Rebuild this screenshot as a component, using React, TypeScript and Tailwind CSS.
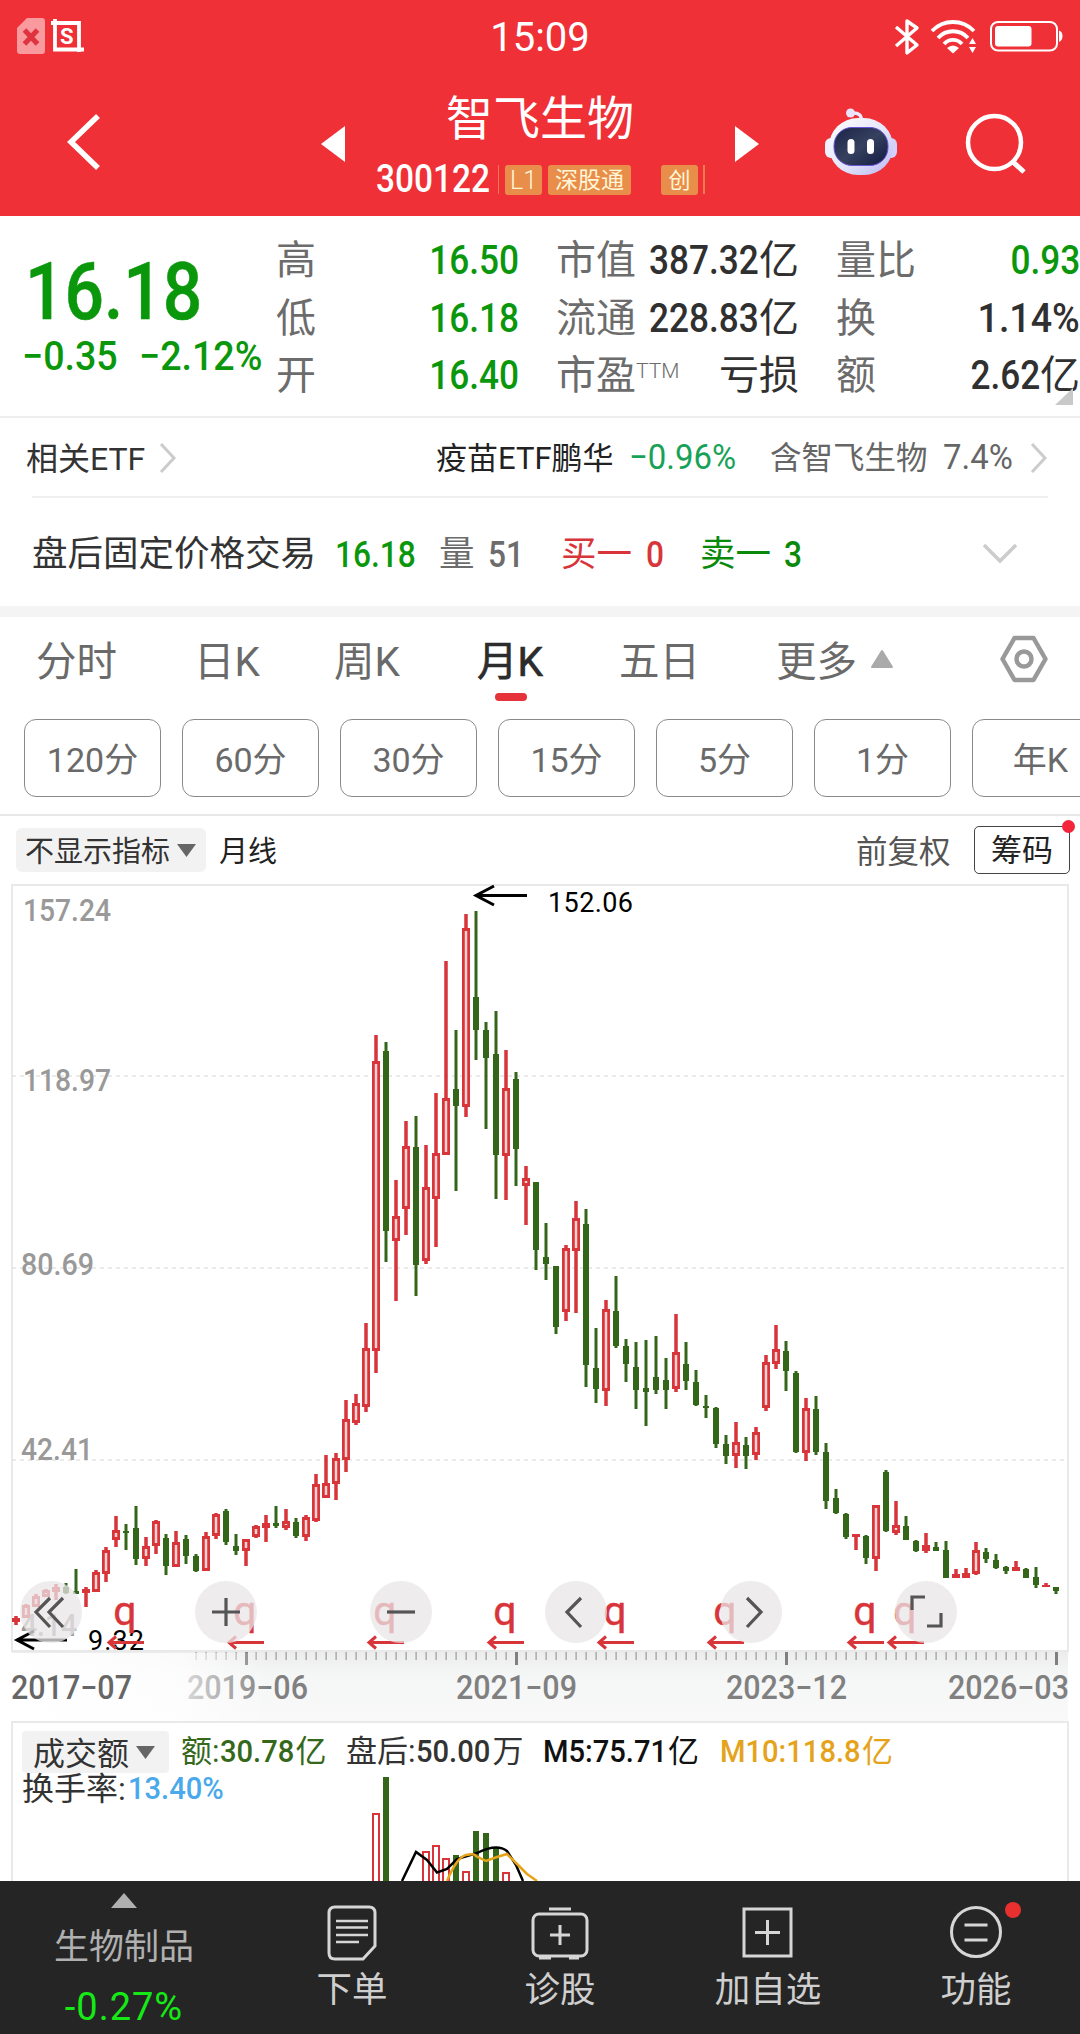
import type { ReactNode } from 'react';

type Tone = 'r' | 'g';
// tone, high, body top, body bottom, low
type Candle = [Tone, number, number, number, number];

const RED = '#d8353b';
const GREEN = '#34661a';

const candles: Candle[] = [
  ['r', 1616, 1618, 1622, 1625], ['r', 1604, 1605, 1618, 1618], ['r', 1594, 1596, 1607, 1607],
  ['r', 1589, 1590, 1597, 1597], ['r', 1584, 1587, 1592, 1600], ['g', 1583, 1587, 1593, 1594],
  ['g', 1569, 1591, 1594, 1594], ['r', 1587, 1589, 1593, 1607], ['r', 1570, 1572, 1592, 1592],
  ['r', 1547, 1550, 1574, 1582], ['r', 1516, 1530, 1540, 1547], ['g', 1524, 1531, 1533, 1550],
  ['g', 1506, 1528, 1559, 1565], ['r', 1537, 1546, 1559, 1566], ['r', 1520, 1521, 1546, 1554],
  ['g', 1534, 1538, 1566, 1575], ['r', 1531, 1542, 1567, 1567], ['g', 1535, 1539, 1556, 1564],
  ['g', 1554, 1556, 1571, 1572], ['r', 1532, 1536, 1571, 1571], ['r', 1513, 1514, 1536, 1539],
  ['g', 1509, 1511, 1542, 1545], ['g', 1534, 1546, 1551, 1555], ['r', 1539, 1539, 1551, 1566],
  ['r', 1525, 1526, 1537, 1538], ['r', 1515, 1523, 1528, 1542], ['g', 1506, 1523, 1526, 1528],
  ['r', 1509, 1521, 1528, 1530], ['g', 1518, 1522, 1536, 1538], ['r', 1515, 1517, 1537, 1541],
  ['r', 1474, 1484, 1521, 1522], ['r', 1455, 1483, 1498, 1498], ['r', 1453, 1458, 1484, 1500],
  ['r', 1400, 1419, 1460, 1472], ['r', 1394, 1403, 1423, 1425], ['r', 1323, 1348, 1407, 1412],
  ['r', 1035, 1061, 1351, 1373], ['g', 1042, 1051, 1231, 1262], ['r', 1180, 1216, 1241, 1301],
  ['r', 1121, 1146, 1209, 1235], ['g', 1116, 1147, 1265, 1296], ['r', 1145, 1187, 1261, 1264],
  ['r', 1093, 1153, 1199, 1247], ['r', 961, 1098, 1155, 1155], ['g', 1030, 1089, 1106, 1191],
  ['r', 914, 928, 1107, 1117], ['g', 911, 997, 1030, 1060], ['g', 1022, 1030, 1058, 1129],
  ['g', 1011, 1054, 1155, 1199], ['r', 1050, 1088, 1156, 1200], ['g', 1072, 1079, 1149, 1186],
  ['r', 1166, 1178, 1186, 1225], ['g', 1182, 1182, 1250, 1270], ['g', 1223, 1257, 1264, 1280],
  ['g', 1266, 1266, 1327, 1334], ['r', 1245, 1248, 1312, 1321], ['r', 1201, 1218, 1251, 1313],
  ['g', 1209, 1224, 1365, 1387], ['g', 1328, 1368, 1389, 1403], ['r', 1300, 1309, 1391, 1406],
  ['g', 1276, 1311, 1346, 1348], ['g', 1339, 1346, 1364, 1382], ['g', 1342, 1367, 1390, 1409],
  ['g', 1340, 1388, 1392, 1426], ['g', 1336, 1377, 1390, 1394], ['g', 1358, 1380, 1390, 1409],
  ['r', 1314, 1352, 1389, 1392], ['g', 1342, 1364, 1381, 1390], ['g', 1370, 1382, 1405, 1406],
  ['g', 1395, 1406, 1408, 1418], ['g', 1407, 1408, 1444, 1448], ['g', 1435, 1444, 1456, 1464],
  ['r', 1422, 1442, 1456, 1468], ['g', 1437, 1445, 1456, 1469], ['r', 1427, 1432, 1455, 1460],
  ['r', 1355, 1362, 1408, 1411], ['r', 1325, 1349, 1364, 1369], ['g', 1341, 1351, 1371, 1391],
  ['g', 1371, 1373, 1452, 1453], ['r', 1398, 1408, 1453, 1461], ['g', 1396, 1409, 1452, 1455],
  ['g', 1443, 1452, 1501, 1509], ['g', 1489, 1498, 1513, 1514], ['g', 1513, 1514, 1537, 1539],
  ['r', 1534, 1534, 1537, 1550], ['g', 1535, 1536, 1558, 1564], ['r', 1505, 1505, 1559, 1571],
  ['g', 1470, 1472, 1531, 1532], ['r', 1501, 1525, 1533, 1535], ['g', 1516, 1526, 1540, 1540],
  ['g', 1540, 1541, 1551, 1552], ['r', 1533, 1545, 1551, 1553], ['g', 1542, 1547, 1551, 1551],
  ['g', 1541, 1550, 1578, 1578], ['r', 1569, 1574, 1578, 1578], ['r', 1568, 1573, 1578, 1578],
  ['r', 1542, 1550, 1574, 1575], ['g', 1548, 1552, 1559, 1563], ['g', 1554, 1560, 1568, 1569],
  ['g', 1566, 1567, 1571, 1574], ['r', 1561, 1567, 1571, 1571], ['g', 1568, 1569, 1578, 1578],
  ['g', 1567, 1577, 1585, 1588], ['r', 1583, 1585, 1587, 1587], ['g', 1587, 1587, 1591, 1594],
];

const dividends = [125, 245, 385, 505, 615, 725, 865, 905];

const priceLabels = [
  { text: '157.24', x: 23, y: 921, w: 88 },
  { text: '118.97', x: 23, y: 1091, w: 88 },
  { text: '80.69', x: 21, y: 1275, w: 73 },
  { text: '42.41', x: 21, y: 1460, w: 72 },
  { text: '4.14', x: 21, y: 1636, w: 56 },
];

const dateLabels = [
  { text: '2019−06', x: 187 },
  { text: '2021−09', x: 456 },
  { text: '2023−12', x: 726 },
  { text: '2026−03', x: 948 },
];

const volumeBars: [Tone, number, number][] = [
  ['r', 376, 1813], ['g', 386, 1777], ['r', 426, 1851], ['r', 436, 1845], ['r', 446, 1858],
  ['g', 456, 1855], ['r', 466, 1871], ['g', 476, 1831], ['g', 486, 1833], ['g', 496, 1847], ['r', 506, 1872],
];

const periods = ['120分', '60分', '30分', '15分', '5分', '1分', '年K'];

interface NumProps {
  children: ReactNode;
  className?: string;
  right?: boolean;
  wide?: boolean;
}

// Narrow digits: the inner span is squeezed, the caller gives the box its width
function Num({ children, className = '', right = false, wide = false }: NumProps) {
  return (
    <span className={`flex shrink-0 whitespace-nowrap ${right ? 'justify-end' : ''} ${className}`}>
      <span className={`block ${wide ? 'scale-x-[0.94]' : 'scale-x-[0.88]'} ${right ? 'origin-right' : 'origin-left'}`}>
        {children}
      </span>
    </span>
  );
}

function StatusBar() {
  return (
    <div className="flex h-14 items-end justify-between pr-[17px] pl-[17px]">
      <div className="flex h-[38px] w-[300px] items-start gap-1.5">
        <svg width="28" height="38" viewBox="0 0 28 38">
          <path d="M10 0H25a3 3 0 0 1 3 3V33a3 3 0 0 1-3 3H3a3 3 0 0 1-3-3V10z" fill="#f99a9f" />
          <path d="M7.500 12l13 14M20.500 12L7.500 26" stroke="#df3440" strokeWidth="5" />
        </svg>
        <svg width="33" height="36" viewBox="0 0 33 36" fill="none" stroke="#fff" strokeWidth="3.8">
          <path d="M0 5H28V34M4 1V31.500H33" />
          <text x="9" y="26" fontSize="22" fontFamily="Roboto" fontWeight="700" fill="#fff" stroke="none">S</text>
        </svg>
      </div>
      <div className="h-[37px] text-[40px] leading-[38px] text-white">15:09</div>
      <div className="flex h-[38px] w-[300px] items-start justify-end">
        <svg width="170" height="38" viewBox="893 18 170 38" fill="none" stroke="#fff">
          <path d="M896 27L917 45 907 53V21L917 28 896 46" strokeWidth="3.400" strokeLinejoin="round" />
          <path d="M932 31A29 29 0 0 1 974 31M938 38A20 20 0 0 1 968 38M944 44A12 12 0 0 1 962 44" strokeWidth="3.8" />
          <path d="M947 48Q953 43 959 48L953 53.500zM969 44L972.500 38 976 44zM969 47H976L972.500 53z" fill="#fff" stroke="none" />
          <rect x="991" y="22" width="66" height="28.500" rx="7" strokeWidth="2" />
          <rect x="995" y="26" width="36.500" height="20.500" rx="3" fill="#fff" stroke="none" />
          <path d="M1059 30.500q3.500 1 3.500 5.500t-3.500 6z" fill="#fff" stroke="none" />
        </svg>
      </div>
    </div>
  );
}

function Robot() {
  return (
    <svg width="74" height="70" viewBox="0 0 74 70">
      <defs>
        <linearGradient id="shell" x1="0" y1="0" x2="1" y2="1">
          <stop offset="0" stopColor="#ffffff" />
          <stop offset="0.55" stopColor="#e3e4fa" />
          <stop offset="1" stopColor="#b9b6f3" />
        </linearGradient>
        <linearGradient id="visor" x1="0" y1="0" x2="1" y2="1">
          <stop offset="0" stopColor="#1b2446" />
          <stop offset="0.5" stopColor="#36405f" />
          <stop offset="1" stopColor="#121b40" />
        </linearGradient>
      </defs>
      <path d="M37 15Q39 5 27 6" stroke="#eeeaff" strokeWidth="3.500" fill="none" />
      <circle cx="26.500" cy="6" r="4.500" fill="#eae3fd" />
      <rect x="1" y="31" width="14" height="20" rx="6" fill="#eef0ff" />
      <rect x="59" y="31" width="14" height="20" rx="6" fill="#d5d2fa" />
      <rect x="5" y="11" width="64" height="57" rx="29" fill="url(#shell)" />
      <rect x="10" y="20.500" width="54" height="38" rx="18" fill="url(#visor)" stroke="#6a55d8" strokeWidth="1" />
      <rect x="23.500" y="32" width="7" height="15" rx="3.500" fill="#fff" />
      <rect x="43" y="32" width="7" height="15" rx="3.500" fill="#fff" />
    </svg>
  );
}

function Header() {
  return (
    <div className="h-[216px] bg-[#ef3036] text-white">
      <StatusBar />
      <div className="flex h-40">
        <svg className="mt-14 ml-[65px]" width="40" height="60" viewBox="0 0 40 60">
          <path d="M33 4L6 30 33 56" stroke="#fff" strokeWidth="5.500" fill="none" />
        </svg>
        <svg className="mt-[70px] ml-[216px]" width="24" height="36" viewBox="0 0 24 36">
          <path d="M0 18L24 0V36z" fill="#fff" />
        </svg>
        <div className="ml-[30px] flex w-[330px] flex-col">
          <div className="mt-8 ml-[71px] h-[58px] text-[47px] leading-[62px]">智飞生物</div>
          <div className="mt-[18px] flex h-[31px] items-center">
            <Num className="ml-px w-[122px] text-[38px] leading-[35px] font-medium">300122</Num>
            <span className="h-[29px] w-px bg-[#f07c4c]" />
            <span className="ml-[6px] h-[30px] w-[37px] rounded-[3px] bg-[#e98e4a] text-center text-[25px] leading-[31px] font-light text-[#fff6d8]">L1</span>
            <span className="ml-[6px] h-[30px] w-[83px] rounded-[3px] bg-[#e98e4a] text-center text-[23px] leading-[31px] text-[#fff6d8]">深股通</span>
            <span className="ml-[30px] h-[30px] w-[37px] rounded-[3px] bg-[#e98e4a] text-center text-[22px] leading-[31px] text-[#fff6d8]">创</span>
            <span className="ml-[5px] h-[29px] w-0.5 bg-[#f07c4c]" />
          </div>
        </div>
        <svg className="mt-[70px] ml-[30px]" width="24" height="36" viewBox="0 0 24 36">
          <path d="M24 18L0 0V36z" fill="#fff" />
        </svg>
        <div className="mt-[51px] ml-[65px]">
          <Robot />
        </div>
        <svg className="mt-14 ml-[66px]" width="64" height="64" viewBox="964 112 64 64" fill="none" stroke="#fff" strokeWidth="4.500">
          <circle cx="994.500" cy="142.500" r="26.500" />
          <path d="M1013 162L1024 172" strokeWidth="5" />
        </svg>
      </div>
    </div>
  );
}

function QuotePanel() {
  return (
    <div className="relative flex h-[202px] border-b-2 border-[#eee] pt-4 text-[40px] text-[#303030]">
      <div className="w-[276px] pt-[23px] font-medium text-[#0a970c]">
        <Num className="ml-[25px] h-[74px] w-[170px] text-[79px] leading-[74px] [-webkit-text-stroke:0.5px]">16.18</Num>
        <div className="flex pt-2 leading-[40px]">
          <Num wide className="ml-[22px] w-[117px]">−0.35</Num>
          <Num wide>−2.12%</Num>
        </div>
      </div>
      <div className="w-[243px] leading-[57.500px]">
        {[['高', '16.50'], ['低', '16.18'], ['开', '16.40']].map(([label, value]) => (
          <div key={label} className="flex justify-between">
            <span className="text-[#6c6c6c]">{label}</span>
            <Num right className="font-medium text-[#0a970c]">{value}</Num>
          </div>
        ))}
      </div>
      <div className="ml-[37px] w-[243px] leading-[57.500px]">
        <div className="flex justify-between">
          <span className="text-[#6c6c6c]">市值</span>
          <span className="flex"><Num right className="w-[110px] font-medium">387.32</Num>亿</span>
        </div>
        <div className="flex justify-between">
          <span className="text-[#6c6c6c]">流通</span>
          <span className="flex"><Num right className="w-[110px] font-medium">228.83</Num>亿</span>
        </div>
        <div className="flex justify-between">
          <span className="flex text-[#6c6c6c]">市盈<span className="text-[21px] leading-[48px] font-light">TTM</span></span>
          <span>亏损</span>
        </div>
      </div>
      <div className="ml-[37px] w-[244px] leading-[57.500px]">
        <div className="flex justify-between">
          <span className="text-[#6c6c6c]">量比</span>
          <Num right className="font-medium text-[#0a970c]">0.93</Num>
        </div>
        <div className="flex justify-between">
          <span className="text-[#6c6c6c]">换</span>
          <Num right wide className="font-medium">1.14%</Num>
        </div>
        <div className="flex justify-between">
          <span className="text-[#6c6c6c]">额</span>
          <span className="flex"><Num right className="font-medium">2.62</Num>亿</span>
        </div>
      </div>
      <svg className="absolute top-[172px] left-[1055px]" width="18" height="17" viewBox="0 0 18 17">
        <path d="M18 0V17H0z" fill="#c9c9c9" />
      </svg>
    </div>
  );
}

function Chevron({ className = '' }: { className?: string }) {
  return (
    <svg className={className} width="18" height="32" viewBox="0 0 18 32">
      <path d="M2 2L15 16 2 30" stroke="#ccc" strokeWidth="3" fill="none" />
    </svg>
  );
}

function EtfRow() {
  return (
    <div className="mx-[32px] flex h-20 items-center border-b-2 border-[#f0f0f0] pt-0.5 text-[31.500px] text-[#333]">
      <span className="-ml-[6px] w-[119px] pt-0.5 text-[32px] whitespace-nowrap">相关ETF</span>
      <Chevron className="ml-[14px]" />
      <span className="ml-[259px] w-[178px] pt-0.5 text-[31px] whitespace-nowrap text-[#222]">疫苗ETF鹏华</span>
      <Num wide className="ml-[15px] w-[141px] text-[35px] text-[#18a257]">−0.96%</Num>
      <span className="w-[173px] pt-0.5 whitespace-nowrap text-[#666]">含智飞生物</span>
      <Num wide className="w-[87px] text-[35px] text-[#666]">7.4%</Num>
      <Chevron />
    </div>
  );
}

function AfterHoursRow() {
  return (
    <div className="flex h-[108px] items-center pt-[5px] pl-[32px] text-[35.500px] whitespace-nowrap text-[#333]">
      <span className="w-[303px]">盘后固定价格交易</span>
      <Num className="w-[104px] text-[36px] font-medium text-[#0a970c]">16.18</Num>
      <span className="w-[49px] text-[#6c6c6c]">量</span>
      <Num className="w-[73px] text-[36px] font-medium text-[#6c6c6c]">51</Num>
      <span className="w-[85px] text-[#d8353b]">买一</span>
      <Num className="w-[54px] text-[36px] font-medium text-[#d8353b]">0</Num>
      <span className="w-[84px] text-[#0a8a0c]">卖一</span>
      <Num className="w-[197px] text-[36px] font-medium text-[#0a8a0c]">3</Num>
      <svg width="38" height="22" viewBox="0 0 38 22">
        <path d="M3 1L19 17 35 1" stroke="#ccc" strokeWidth="3.500" fill="none" />
      </svg>
    </div>
  );
}

function Tabs() {
  return (
    <div className="flex h-[102px] items-start pt-2 pl-[36px] text-[40.500px] leading-[74px] whitespace-nowrap text-[#6a6a6a]">
      <span className="w-[158px]">分时</span>
      <span className="w-[140px]">日K</span>
      <span className="w-[143px]">周K</span>
      <span className="flex w-[142px] flex-col text-[#2c2c2c] [-webkit-text-stroke:0.7px]">
        月K
        <span className="-mt-1.5 ml-[18px] h-2 w-8 rounded-full bg-[#e63239]" />
      </span>
      <span className="w-[157px]">五日</span>
      <span className="w-[94px]">更多</span>
      <svg className="mt-6" width="24" height="20" viewBox="0 0 24 20">
        <path d="M12 2L22 18H2z" fill="#aaa" stroke="#aaa" strokeWidth="2" strokeLinejoin="round" />
      </svg>
      <svg className="mt-2.5 ml-[105px]" width="50" height="48" viewBox="0 0 50 48" fill="none" stroke="#999" strokeWidth="4.500">
        <path d="M15.500 3H34.500L46.500 24 34.500 45H15.500L3.500 24z" strokeLinejoin="round" />
        <circle cx="25" cy="24" r="7.500" />
      </svg>
    </div>
  );
}

function PeriodPills() {
  return (
    <div className="flex h-[97px] gap-[21px] overflow-hidden border-b-2 border-[#e8e8e8] pl-6">
      {periods.map((p) => (
        <button key={p} className="h-[78px] w-[137px] shrink-0 rounded-xl border border-[#8a8a8a] text-[34px] leading-[80px] text-[#6a6a6a]">
          {p}
        </button>
      ))}
    </div>
  );
}

function DownTriangle({ className = '' }: { className?: string }) {
  return (
    <svg className={className} width="19" height="13" viewBox="0 0 19 13">
      <path d="M0 0H19L9.500 13z" fill="#666" />
    </svg>
  );
}

function IndicatorBar() {
  return (
    <div className="flex h-[67px] items-start pt-2.5 pl-4 whitespace-nowrap">
      <div className="mt-0.5 flex h-11 w-[190px] items-center rounded-md bg-[#f2f2f2] pl-[9px] text-[29px] leading-[44px] text-[#333]">
        <span className="pt-[3px]">不显示指标</span>
        <DownTriangle className="ml-[7px]" />
      </div>
      <span className="mt-1 ml-[13px] w-[637px] text-[29px] leading-[44px] text-[#222]">月线</span>
      <span className="mt-1 w-[118px] text-[31.500px] leading-[46px] text-[#555]">前复权</span>
      <div className="relative h-12 w-24 rounded-[5px] border-[1.500px] border-[#444] text-center text-[31px] leading-[48px] text-[#222]">
        筹码
        <span className="absolute -top-[7px] -right-[6px] size-[13px] rounded-full bg-[#f4243b]" />
      </div>
    </div>
  );
}

function CandleShape({ x, candle }: { x: number; candle: Candle }) {
  const [tone, high, top, bottom, low] = candle;
  if (tone === 'g') {
    return (
      <g fill={GREEN}>
        <rect x={x - 1.5} y={high} width="3" height={low - high} />
        <rect x={x - 3} y={top} width="6" height={bottom - top} />
      </g>
    );
  }
  return (
    <g fill={RED}>
      <rect x={x - 1.75} y={high} width="3.500" height={low - high} />
      <rect x={x - 4} y={top} width="8" height={bottom - top} />
      {bottom - top > 6 && <rect x={x - 1.25} y={top + 3} width="2.500" height={bottom - top - 6} fill="#fbd3d3" />}
    </g>
  );
}

function RoundButton({ children }: { children: ReactNode }) {
  return (
    <button className="size-[62px] rounded-full bg-[#e9e6e7]/75">
      <svg width="62" height="62" viewBox="-31 -31 62 62" fill="none" stroke="#555" strokeWidth="3.200">
        {children}
      </svg>
    </button>
  );
}

function KlineChart() {
  const ticks = Array.from({ length: 87 }, (_, i) => 196 + i * 10);
  const majors = [246, 516, 786, 1056];

  return (
    <div className="relative h-[838px]">
      <svg className="block" width="1080" height="838" viewBox="0 883 1080 838" fontFamily="Roboto, sans-serif">
        <defs>
          <linearGradient id="axis" x1="0" y1="0" x2="0" y2="1">
            <stop offset="0" stopColor="#ececec" />
            <stop offset="0.35" stopColor="#f5f6f6" />
            <stop offset="1" stopColor="#f9f9f9" />
          </linearGradient>
          <linearGradient id="fade" x1="0" y1="0" x2="1" y2="0">
            <stop offset="0" stopColor="#fff" />
            <stop offset="0.65" stopColor="#fff" stopOpacity="0.75" />
            <stop offset="1" stopColor="#fff" stopOpacity="0" />
          </linearGradient>
        </defs>

        {/* Frame, grid and time axis */}
        <rect x="12" y="1651" width="1056" height="70" fill="url(#axis)" />
        <rect x="12" y="885" width="1056" height="766" fill="none" stroke="#e9e9e9" strokeWidth="2" />
        {[1076, 1268, 1460].map((y) => (
          <path key={y} d={`M12 ${y}H1068`} stroke="#e4e4e4" strokeWidth="1.500" strokeDasharray="4 4" />
        ))}
        {ticks.map((x) => (
          <rect key={x} x={x - 0.5} y="1652" width="1.200" height="8" fill="#999" />
        ))}
        {majors.map((x) => (
          <rect key={x} x={x - 1} y="1652" width="3" height="13" fill="#808080" />
        ))}
        {dateLabels.map((d) => (
          <text key={d.text} x={d.x} y="1699" fontSize="32.500" fontWeight="500" fill="#808080" textLength="121" lengthAdjust="spacingAndGlyphs">{d.text}</text>
        ))}
        <rect x="10" y="1653" width="260" height="68" fill="url(#fade)" />
        <text x="11" y="1699" fontSize="32.500" fontWeight="500" fill="#666" textLength="121" lengthAdjust="spacingAndGlyphs">2017−07</text>

        {priceLabels.map((l) => (
          <text key={l.text} x={l.x} y={l.y} fontSize="31" fontWeight="500" fill="#999" textLength={l.w} lengthAdjust="spacingAndGlyphs">{l.text}</text>
        ))}

        {candles.map((c, i) => (
          <CandleShape key={i} x={16 + i * 10} candle={c} />
        ))}

        {/* High and low markers */}
        <g fill="none" stroke="#000" strokeWidth="3">
          <path d="M527 895.500H477M494 886L476 895.500 494 905" />
          <path d="M67 1640H18M34 1631L17 1640 34 1649" />
        </g>
        <text x="548" y="912" fontSize="27" textLength="85">152.06</text>
        <text x="88" y="1650" fontSize="27" textLength="56">9.32</text>

        {/* Dividend markers */}
        {dividends.map((x) => (
          <g key={x}>
            <text x={x} y="1624.500" fontSize="41" fill={RED} stroke={RED} strokeWidth="0.4" textAnchor="middle">q</text>
            <path d={`M${x + 19} 1642.500H${x - 15}M${x - 9} 1636.500L${x - 16} 1642.500 ${x - 9} 1648.500`} stroke={RED} strokeWidth="3" fill="none" />
          </g>
        ))}
      </svg>

      <div className="absolute top-[698px] left-5 flex gap-[113px]">
        <RoundButton><path d="M-1 -14L-15 0-1 15M12 -14L-2 0 12 15" /></RoundButton>
        <RoundButton><path d="M-14 0H14M0 -14V14" /></RoundButton>
        <RoundButton><path d="M-14 0H14" /></RoundButton>
        <RoundButton><path d="M5 -14L-9 0 5 15" /></RoundButton>
        <RoundButton><path d="M-4 -14L10 0-4 15" /></RoundButton>
        <RoundButton><path d="M-1 -15H-14V-2M15 1V14H1" /></RoundButton>
      </div>
    </div>
  );
}

function VolumePanel() {
  return (
    <div className="relative mx-[11px] h-[160px] overflow-hidden border-x-2 border-t-2 border-[#e9e9e9] text-[31px] leading-[42px] whitespace-nowrap text-[#333]">
      <div className="flex pt-2 pl-[9px]">
        <div className="flex h-[42px] w-[147px] items-center rounded bg-[#f2f2f2] pl-[11px] text-[32px]">
          <span className="pt-[3px]">成交额</span>
          <DownTriangle className="ml-[7px]" />
        </div>
        <span className="ml-3 flex w-[165px] text-[#35681a]">额:<Num wide className="w-[76px] font-medium">30.78</Num>亿</span>
        <span className="flex w-[197px]">盘后:<Num wide className="w-[77px] font-medium">50.00</Num>万</span>
        <span className="flex w-[177px] text-[#111]"><Num wide className="w-[125px] font-medium">M5:75.71</Num>亿</span>
        <span className="flex text-[#e5a31c]"><Num wide className="w-[142px] font-medium">M10:118.8</Num>亿</span>
      </div>
      <div className="-mt-[5px] flex pl-[9px]">
        <span className="w-[106px] text-[32px]">换手率:</span>
        <Num wide className="font-medium text-[#4aa9ea]">13.40%</Num>
      </div>
      <svg className="absolute top-0 left-0" width="1055" height="158" viewBox="13 1723 1055 158">
        {volumeBars.map(([tone, x, top]) =>
          tone === 'g' ? (
            <rect key={x} x={x - 3} y={top} width="6" height={1881 - top} fill={GREEN} />
          ) : (
            <rect key={x} x={x - 3} y={top + 1} width="6" height={1890 - top} fill="#fff" stroke={RED} strokeWidth="2" />
          ),
        )}
        <path d="M402 1881L416 1852 427 1860 437 1872.500 447 1869 457 1859 477 1853Q497 1843 507 1851L516 1865 523 1881" stroke="#000" strokeWidth="2.500" fill="none" />
        <path d="M447 1881Q457 1857 466 1855T476 1856L486 1861 497 1857 507 1854 518 1865 527 1874 537 1881" stroke="#e5a31c" strokeWidth="2.500" fill="none" />
      </svg>
    </div>
  );
}

function NavItem({ label, children }: { label: string; children: ReactNode }) {
  return (
    <div className="flex w-52 flex-col items-center pt-5 text-[35.500px] leading-[51px] text-[#cfcfcf]">
      <svg width="100" height="64" viewBox="-50 -32 100 64" fill="none" stroke="#d6d6d6" strokeWidth="3">
        {children}
      </svg>
      <span>{label}</span>
    </div>
  );
}

function BottomBar() {
  return (
    <div className="flex h-[153px] bg-[#252525]">
      <div className="flex w-[248px] flex-col items-center pt-3">
        <svg width="26" height="15" viewBox="0 0 26 15">
          <path d="M13 0L26 15H0z" fill="#b0b0b0" />
        </svg>
        <span className="mt-[14px] text-[35px] leading-[51px] text-[#b0b0b0]">生物制品</span>
        <span className="mt-[12px] text-[38px] leading-[44px] tracking-[1px] text-[#16ea16]">-0.27%</span>
      </div>
      <NavItem label="下单">
        <path d="M-17 -26H17Q23 -26 23 -20V13L11 26H-17Q-23 26 -23 20V-20Q-23 -26 -17 -26z" />
        <path d="M-16 -12H16M-16 -5.500H16M-16 2H16M-16 9H7" strokeWidth="2.500" />
      </NavItem>
      <NavItem label="诊股">
        <rect x="-27" y="-19" width="54" height="42" rx="6" />
        <path d="M-11 -24H11M-21 25H-9M9 25H19M-10 2H10M0 -8V12" />
      </NavItem>
      <NavItem label="加自选">
        <rect x="-24" y="-24" width="47" height="47" />
        <path d="M-13 -0.500H12M-0.500 -13V12" />
      </NavItem>
      <NavItem label="功能">
        <circle cx="0" cy="-1" r="24.500" />
        <path d="M-11.500 -8H11.500M-11.500 7H11.500" />
        <circle cx="37" cy="-23" r="8" fill="#e8312f" stroke="none" />
      </NavItem>
    </div>
  );
}

export default function App() {
  return (
    <div className="w-[1080px] overflow-hidden bg-white font-['Roboto','Noto_Sans_CJK_SC',sans-serif]">
      <Header />
      <QuotePanel />
      <EtfRow />
      <AfterHoursRow />
      <div className="h-[11px] bg-[#f5f4f5]" />
      <Tabs />
      <PeriodPills />
      <IndicatorBar />
      <KlineChart />
      <VolumePanel />
      <BottomBar />
    </div>
  );
}
